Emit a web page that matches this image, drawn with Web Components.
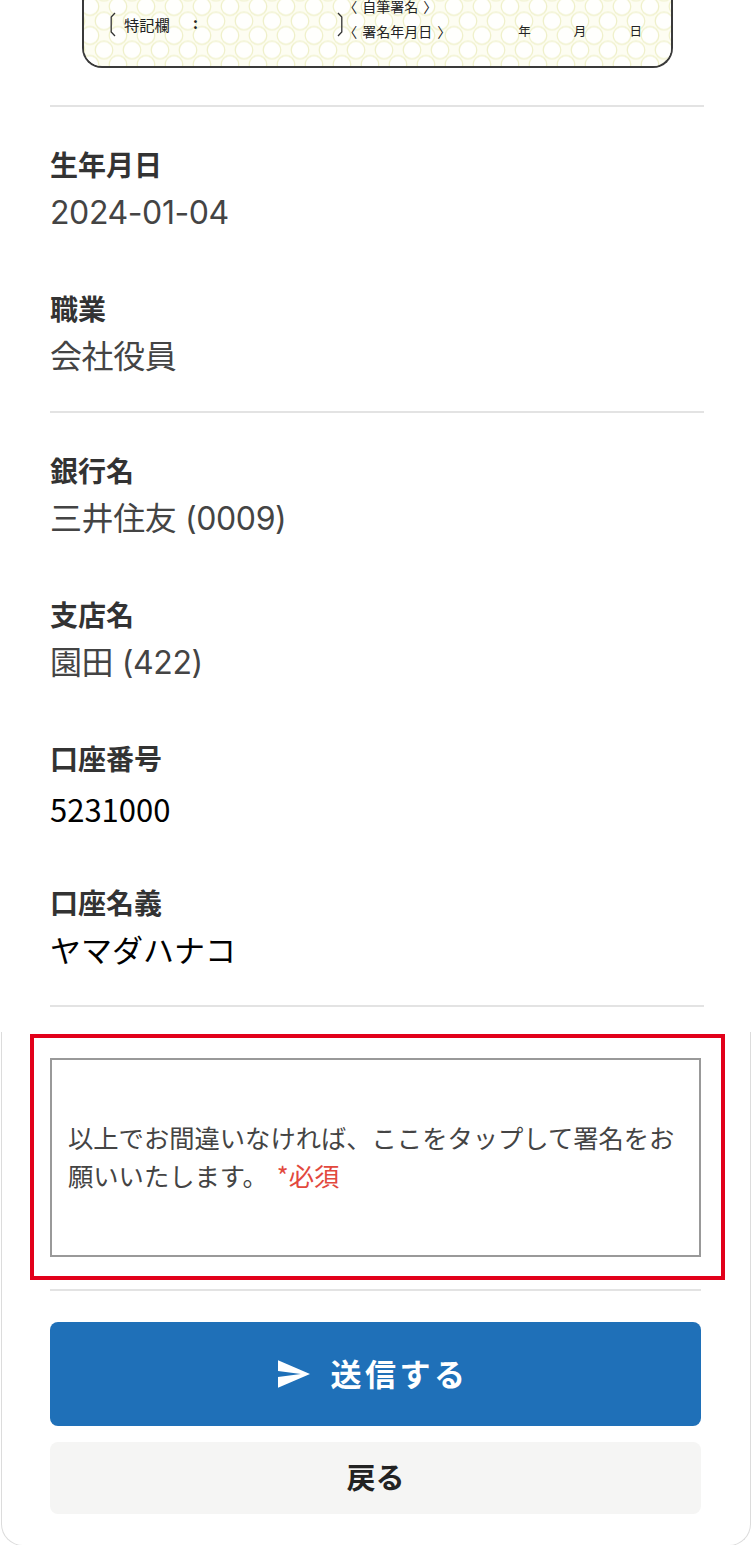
<!DOCTYPE html>
<html lang="ja">
<head>
<meta charset="utf-8">
<title>確認</title>
<style>
html, body { margin: 0; padding: 0; background: #fff; }
body { width: 752px; height: 1545px; overflow: hidden; font-family: "Noto Sans CJK JP", "Noto Sans", sans-serif; }
</style>
</head>
<body>
<confirm-page>
    <license-card></license-card>
    <h-rule></h-rule>

    <field-group>
        <info-field><span slot="label">生年月日</span>2024-01-04</info-field>
        <info-field><span slot="label">職業</span>会社役員</info-field>
    </field-group>
    <h-rule></h-rule>

    <field-group>
        <info-field><span slot="label">銀行名</span>三井住友 (0009)</info-field>
        <info-field><span slot="label">支店名</span>園田 (422)</info-field>
        <info-field variant="input"><span slot="label">口座番号</span>5231000</info-field>
        <info-field variant="filled"><span slot="label">口座名義</span>ヤマダハナコ</info-field>
    </field-group>
    <h-rule></h-rule>

    <action-panel>
        <sign-box>以上でお間違いなければ、ここをタップして署名をお<br>願いいたします。<span slot="required">*必須</span></sign-box>
        <h-rule></h-rule>
        <app-button variant="primary">送信する</app-button>
        <app-button>戻る</app-button>
    </action-panel>
</confirm-page>

<script>
class ConfirmPage extends HTMLElement {
    constructor() {
        super();
        const shadow = this.attachShadow({ mode: 'open' });
        shadow.innerHTML = `
<style>
:host { display: block; height: 1545px; color: #333; }
</style>
<slot></slot>`;
    }
}

class HRule extends HTMLElement {
    constructor() {
        super();
        const shadow = this.attachShadow({ mode: 'open' });
        shadow.innerHTML = `
<style>
:host { display: block; height: 2px; margin: 0 48px 0 50px; background: #e3e3e3; }
</style>`;
    }
}

class LicenseCard extends HTMLElement {
    constructor() {
        super();
        const shadow = this.attachShadow({ mode: 'open' });
        shadow.innerHTML = `
<style>
:host { display: block; padding: 0 79px 37px 82px; }
.card {
    position: relative;
    height: 68px;
    box-sizing: border-box;
    border: 2px solid #3a3a3a;
    border-top: none;
    border-radius: 0 0 20px 20px;
    overflow: hidden;
    background: #fdfdf2;
    color: #222;
    font-size: 14px;
    line-height: 20px;
}
.pattern { position: absolute; left: 0; top: 0; width: 100%; height: 100%; }
.pattern circle { fill: #fffffd; stroke: #eff0c9; stroke-width: 1.3; }
.content { position: relative; display: flex; height: 100%; padding-left: 26px; box-sizing: border-box; }
.note { display: flex; align-items: flex-start; width: 235px; padding-top: 12px; }
.note svg { flex: none; }
.note .title { margin-left: 8px; width: 69px; font-size: 15.3px; line-height: 24px; }
.note .colon { flex: 1; font-size: 15px; line-height: 22px; font-weight: 700; }
.sign { margin-top: -7px; width: 330px; }
.sign .row { display: flex; height: 25px; align-items: center; }
.sign .open { margin-right: 5px; }
.sign .close { margin-left: 5px; }
.sign .date { display: flex; margin-left: 67px; gap: 43px; font-size: 12.5px; }
</style>
<div class="card">
    <svg class="pattern" aria-hidden="true">
        <defs>
            <pattern id="rings" width="28" height="29" patternUnits="userSpaceOnUse" x="-1" y="-0.5">
                <circle cx="7" cy="7" r="8.8"/>
                <circle cx="35" cy="7" r="8.8"/>
                <circle cx="7" cy="36" r="8.8"/>
                <circle cx="21" cy="21.5" r="8.8"/>
                <circle cx="-7" cy="21.5" r="8.8"/>
                <circle cx="21" cy="-7.5" r="8.8"/>
            </pattern>
        </defs>
        <rect width="100%" height="100%" fill="url(#rings)"/>
    </svg>
    <div class="content">
        <div class="note">
            <svg width="6" height="25" viewBox="0 0 6 25"><path d="M5 1 L1.2 5 V20 L5 24" fill="none" stroke="#333" stroke-width="1.3"/></svg>
            <span class="title">特記欄</span>
            <span class="colon">:</span>
            <svg width="6" height="25" viewBox="0 0 6 25"><path d="M1 1 L4.8 5 V20 L1 24" fill="none" stroke="#333" stroke-width="1.3"/></svg>
        </div>
        <div class="sign">
            <div class="row"><span class="open">〈</span><span>自筆署名</span><span class="close">〉</span></div>
            <div class="row"><span class="open">〈</span><span>署名年月日</span><span class="close">〉</span><span class="date"><span>年</span><span>月</span><span>日</span></span></div>
        </div>
    </div>
</div>`;
    }
}

class FieldGroup extends HTMLElement {
    constructor() {
        super();
        const shadow = this.attachShadow({ mode: 'open' });
        shadow.innerHTML = `
<style>
:host { display: flex; flex-direction: column; gap: 49px; padding: 36px 48px 29px 50px; }
</style>
<slot></slot>`;
    }
}

class InfoField extends HTMLElement {
    constructor() {
        super();
        const shadow = this.attachShadow({ mode: 'open' });
        shadow.innerHTML = `
<style>
:host { display: block; height: 95px; }
.label { font-size: 28px; line-height: 42px; font-weight: 700; color: #333; }
.value { margin-top: 4px; font-family: Inter, "Noto Sans CJK JP", sans-serif; font-size: 32px; letter-spacing: -0.4px; line-height: 48px; color: #444; white-space: nowrap; }
:host([variant="input"]) .value { font-family: "Noto Sans CJK JP", sans-serif; font-size: 31px; letter-spacing: 0; color: #000; margin-top: 6px; }
:host([variant="filled"]) .value { font-size: 31px; letter-spacing: 0; color: #000; }
</style>
<div class="label"><slot name="label"></slot></div>
<div class="value"><slot></slot></div>`;
    }
}

class SignBox extends HTMLElement {
    constructor() {
        super();
        const shadow = this.attachShadow({ mode: 'open' });
        shadow.innerHTML = `
<style>
:host {
    display: block;
    margin: 0 -24px 9px -20px;
    padding: 20px 20px 19px 16px;
    border: 4px solid #e2001a;
}
.box {
    display: flex;
    align-items: center;
    height: 199px;
    box-sizing: border-box;
    padding: 0 16px 3px;
    border: 2px solid #999;
    background: #fff;
    color: #444;
    font-size: 25.3px;
    line-height: 38px;
}
.req { color: #e2483d; margin-left: 9px; }
</style>
<div class="box"><div><slot></slot><span class="req"><slot name="required"></slot></span></div></div>`;
    }
}

class AppButton extends HTMLElement {
    constructor() {
        super();
        const shadow = this.attachShadow({ mode: 'open' });
        const primary = this.getAttribute('variant') === 'primary';
        shadow.innerHTML = `
<style>
:host { display: block; }
button {
    display: flex;
    align-items: center;
    justify-content: center;
    width: 100%;
    height: 72px;
    padding: 0 0 4px;
    border: none;
    border-radius: 8px;
    background: #f5f5f4;
    color: #222;
    font: 700 29px "Noto Sans CJK JP", "Noto Sans", sans-serif;
}
:host([variant="primary"]) button {
    height: 104px;
    padding: 0 5px 4px 0;
    gap: 21px;
    background: #1f70b8;
    color: #fff;
    font-size: 31px;
    letter-spacing: 3.5px;
}
svg { margin-top: 4px; }
</style>
<button>${primary ? `<svg width="32" height="28" viewBox="2 3 21 18"><path d="M2.01 21 23 12 2.01 3 2 10l15 2-15 2z" fill="#fff"/></svg>` : ''}<span><slot></slot></span></button>`;
    }
}

class ActionPanel extends HTMLElement {
    constructor() {
        super();
        const shadow = this.attachShadow({ mode: 'open' });
        shadow.innerHTML = `
<style>
:host {
    display: flex;
    flex-direction: column;
    box-sizing: border-box;
    height: 514px;
    margin: 25px 1px 0;
    padding: 2px 49px 0 48px;
    border: 1px solid #dcdcdc;
    border-top: none;
    border-radius: 0 0 22px 22px;
    background: #fff;
}
::slotted(h-rule) { margin: 0 0 31px 0; }
::slotted(app-button:last-child) { margin-top: 16px; }
</style>
<slot></slot>`;
    }
}

customElements.define('confirm-page', ConfirmPage);
customElements.define('h-rule', HRule);
customElements.define('license-card', LicenseCard);
customElements.define('field-group', FieldGroup);
customElements.define('info-field', InfoField);
customElements.define('sign-box', SignBox);
customElements.define('app-button', AppButton);
customElements.define('action-panel', ActionPanel);
</script>
</body>
</html>
